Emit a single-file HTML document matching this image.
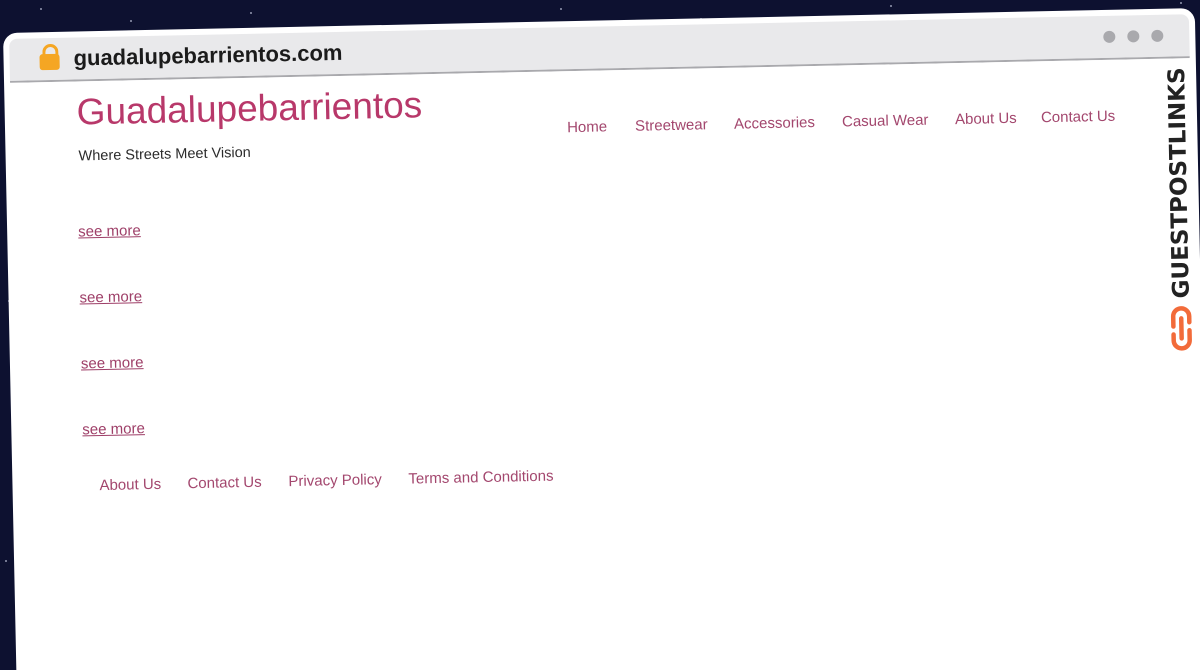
<!DOCTYPE html>
<html><head><style>
html,body{margin:0;padding:0;width:1200px;height:670px;overflow:hidden;background:#0d1130;font-family:"Liberation Sans",sans-serif}
.clip{position:fixed;left:0;top:0;width:1200px;height:670px;overflow:hidden;background:#0d1130}
.star{position:absolute;width:2px;height:2px;background:#cfd3e8;border-radius:50%;opacity:.7}
.win{position:absolute;left:3px;top:33px;width:1192px;height:665px;background:#fff;border-radius:14px 14px 0 0;transform:rotate(-1.2deg);transform-origin:0 0;overflow:hidden}
.bar{position:absolute;left:6px;top:6px;right:6px;height:42px;background:#e9e9eb;border-bottom:2px solid #a9a9ad;border-radius:8px 8px 0 0}
.url{position:absolute;left:64px;top:8px;font-size:22px;font-weight:bold;color:#1b1b1b;font-family:"Liberation Sans",sans-serif}
.lock{position:absolute;left:30px;top:16px;width:20px;height:16px;background:#f5a623;border-radius:3px}
.lock:before{content:"";position:absolute;left:3px;top:-10px;width:10px;height:12px;border:3px solid #f5a623;border-bottom:none;border-radius:8px 8px 0 0}
.dot{position:absolute;top:15px;width:12px;height:12px;border-radius:50%;background:#a9a9ad}
.a{position:absolute;color:#a3476e;font-size:15px;white-space:nowrap}
.sm{text-decoration:underline;color:#9e3f68}
.ft{font-size:15px}
</style></head><body><div class="clip">
<div class="star" style="left:250px;top:12px"></div><div class="star" style="left:560px;top:8px"></div><div class="star" style="left:130px;top:20px"></div><div class="star" style="left:890px;top:5px"></div><div class="star" style="left:40px;top:8px"></div><div class="star" style="left:700px;top:18px"></div><div class="star" style="left:1180px;top:2px"></div><div class="star" style="left:5px;top:560px"></div><div class="star" style="left:8px;top:300px"></div>
<div class="win">
 <div class="bar">
  <div class="lock"></div>
  <div class="url">guadalupebarrientos.com</div>
  <div class="dot" style="right:74px"></div><div class="dot" style="right:50px"></div><div class="dot" style="right:26px"></div>
 </div>
 <div class="a" style="left:72px;top:60px;font-size:37px;color:#b8386a">Guadalupebarrientos</div>
 <div class="a" style="left:73px;top:117px;color:#2b2b2b;font-size:14.5px">Where Streets Meet Vision</div>
 <div class="a ft" style="left:562px;top:98px">Home</div>
 <div class="a ft" style="left:630px;top:98px">Streetwear</div>
 <div class="a ft" style="left:729px;top:98px">Accessories</div>
 <div class="a ft" style="left:837px;top:98px">Casual Wear</div>
 <div class="a ft" style="left:950px;top:98px">About Us</div>
 <div class="a ft" style="left:1036px;top:98px">Contact Us</div>
 <div class="a sm" style="left:71px;top:192px">see more</div>
 <div class="a sm" style="left:71px;top:258px">see more</div>
 <div class="a sm" style="left:71px;top:324px">see more</div>
 <div class="a sm" style="left:71px;top:390px">see more</div>
 <div class="a ft" style="left:87px;top:446px">About Us</div>
 <div class="a ft" style="left:175px;top:446px">Contact Us</div>
 <div class="a ft" style="left:276px;top:446px">Privacy Policy</div>
 <div class="a ft" style="left:396px;top:446px">Terms and Conditions</div>
 <div style="position:absolute;left:1160px;top:290px;transform:rotate(-90deg);transform-origin:0 0;font-family:'DejaVu Sans','Liberation Sans',sans-serif;font-weight:bold;font-size:23px;color:#222;white-space:nowrap">GUESTPOSTLINKS</div>
 <svg style="position:absolute;left:1160px;top:296px" width="24" height="48" viewBox="0 0 24 48"><path d="M4 22 V12 a8 8 0 0 1 16 0 v6 M20 26 v10 a8 8 0 0 1 -16 0 v-6 M12 14 v20" fill="none" stroke="#f26b3a" stroke-width="4.5" stroke-linecap="round"/></svg>
</div>
</div></body></html>
